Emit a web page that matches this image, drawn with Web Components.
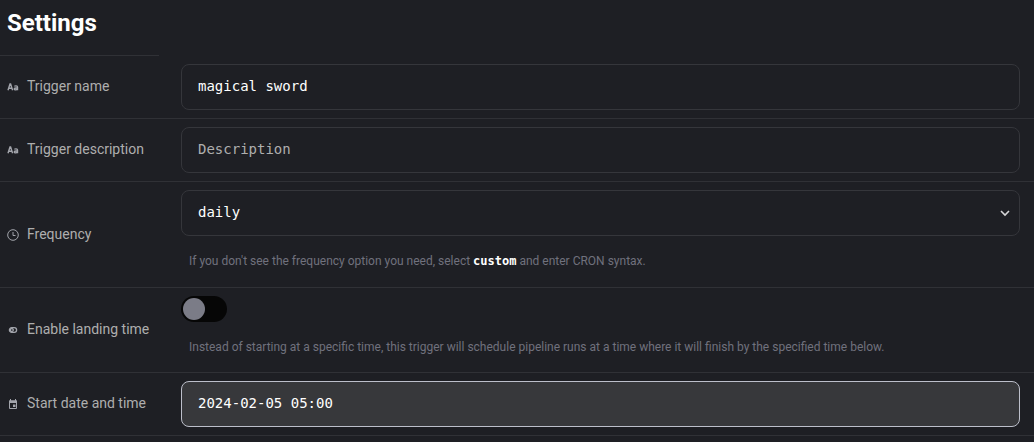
<!DOCTYPE html>
<html lang="en">
<head>
<meta charset="utf-8">
<title>Trigger settings</title>
<style>
  body { margin: 0; background: #1e1f24; color: #aeaeae; font: 14px/20px Roboto, sans-serif; }
</style>
</head>
<body>
<trigger-settings></trigger-settings>

<script>
const icons = {
  text: `<g fill="none" stroke="currentColor" stroke-width="1.4"><path d="M1 9.2 3 3h.6l2 6.2M1.8 7.2h3"/><path d="M7.4 5.4c.6-.7 3.1-.9 3.1.7v3.1M10.5 6.8c-1.6 0-3.2.1-3.2 1.1 0 1.3 2.5 1.2 3.2 0"/></g>`,
  clock: `<g fill="none" stroke="currentColor"><circle cx="6" cy="6" r="5.3"/><path d="M6 3v3.5h2.5"/></g>`,
  toggle: `<g fill="none" stroke="currentColor" stroke-width="1.3"><rect x="2.4" y="3.7" width="7.2" height="4.6" rx="2.3"/><circle cx="4.8" cy="6" r="1.5"/></g>`,
  calendar: `<path fill="none" stroke="currentColor" d="M2.5 3h7v7.5h-7z"/><path fill="currentColor" d="M2 2.5h8V5H2zM3 1h1v2H3zM8 1h1v2H8zM6 6.5h2.5V9H6z"/>`
};

class FieldIcon extends HTMLElement {
  connectedCallback() {
    if (this.shadowRoot) return;
    this.attachShadow({ mode: "open" }).innerHTML = `
      <style>
        :host { display: block; flex: none; width: 12px; height: 12px; color: #a3a5ac; }
        svg { display: block; }
      </style>
      <svg width="12" height="12" viewBox="0 0 12 12" aria-hidden="true">${icons[this.getAttribute("name")]}</svg>`;
  }
}

class FieldRow extends HTMLElement {
  constructor() {
    super();
    this.attachShadow({ mode: "open" }).innerHTML = `
      <style>
        :host { display: grid; grid-template-columns: 159px 1fr; align-items: center; border-bottom: 1px solid #303136; }
        .name { display: flex; align-items: center; gap: 8px; padding: 0 0 2px 7px; }
        .icon { padding-top: 2px; }
        .field { display: flex; flex-direction: column; align-items: stretch; padding: 8px 14px 8px 22px; }
      </style>
      <div class="name"><span class="icon"><slot name="icon"></slot></span><slot name="label"></slot></div>
      <div class="field"><slot></slot></div>`;
  }
}

class FieldHint extends HTMLElement {
  constructor() {
    super();
    this.attachShadow({ mode: "open" }).innerHTML = `
      <style>
        :host { display: block; padding: 16px 8px 8px; color: #70717d; font-size: 12px; line-height: 18px; }
        :host([with-code]) { padding-bottom: 9px; }
        ::slotted(code) { color: #fff; font: bold 12px/18px "DejaVu Sans Mono", monospace; }
      </style>
      <slot></slot>`;
  }
}

class TriggerSettings extends HTMLElement {
  constructor() {
    super();
    this.attachShadow({ mode: "open" }).innerHTML = `
      <style>
        :host { display: block; }
        h1 { box-sizing: border-box; margin: 0; width: 159px; height: 56px; padding: 7px 7px 0; border-bottom: 1px solid #303136;
             color: #fff; font-size: 24px; line-height: 32px; font-weight: 700; }
        label { white-space: nowrap; }
        .box { box-sizing: border-box; width: 100%; height: 46px; margin: 0; padding: 0 16px 2px; border: 1px solid #35363b;
               border-radius: 8px; background: #1e1f24; color: #fff; font: 14px/20px "DejaVu Sans Mono", monospace; outline: none; }
        .box::placeholder { color: #aeaeae; opacity: 1; }
        .box.active { background: #37383b; border-color: #bcbfca; }
        .select { display: grid; align-items: center; }
        .select > * { grid-area: 1 / 1; }
        select.box { appearance: none; }
        .select svg { justify-self: end; margin-right: 10px; pointer-events: none; }
        .switch { appearance: none; box-sizing: border-box; display: block; width: 46px; height: 26px; margin: 0; padding: 2px;
                  border-radius: 13px; background: #060606; }
        .switch::before { content: ""; display: block; width: 22px; height: 22px; border-radius: 50%; background: #7b7c87; }
        .switch:checked::before { margin-left: auto; }
      </style>
      <h1>Settings</h1>
      <field-row>
        <field-icon slot="icon" name="text"></field-icon>
        <label slot="label" for="name">Trigger name</label>
        <input class="box" id="name" value="magical sword">
      </field-row>
      <field-row>
        <field-icon slot="icon" name="text"></field-icon>
        <label slot="label" for="description">Trigger description</label>
        <input class="box" id="description" placeholder="Description">
      </field-row>
      <field-row>
        <field-icon slot="icon" name="clock"></field-icon>
        <label slot="label" for="frequency">Frequency</label>
        <div class="select">
          <select class="box" id="frequency"><option>daily</option></select>
          <svg width="10" height="8" viewBox="0 0 10 8" fill="none" stroke="#d6d6d8" stroke-width="1.6" aria-hidden="true"><path d="m1 2 4 4 4-4"/></svg>
        </div>
        <field-hint with-code>If you don't see the frequency option you need, select <code>custom</code> and enter CRON syntax.</field-hint>
      </field-row>
      <field-row>
        <field-icon slot="icon" name="toggle"></field-icon>
        <label slot="label" for="landing">Enable landing time</label>
        <input class="switch" id="landing" type="checkbox" role="switch">
        <field-hint>Instead of starting at a specific time, this trigger will schedule pipeline runs at a time where it will finish by the specified time below.</field-hint>
      </field-row>
      <field-row>
        <field-icon slot="icon" name="calendar"></field-icon>
        <label slot="label" for="start">Start date and time</label>
        <input class="box active" id="start" value="2024-02-05 05:00">
      </field-row>`;
  }
}

customElements.define("field-icon", FieldIcon);
customElements.define("field-row", FieldRow);
customElements.define("field-hint", FieldHint);
customElements.define("trigger-settings", TriggerSettings);
</script>
</body>
</html>
